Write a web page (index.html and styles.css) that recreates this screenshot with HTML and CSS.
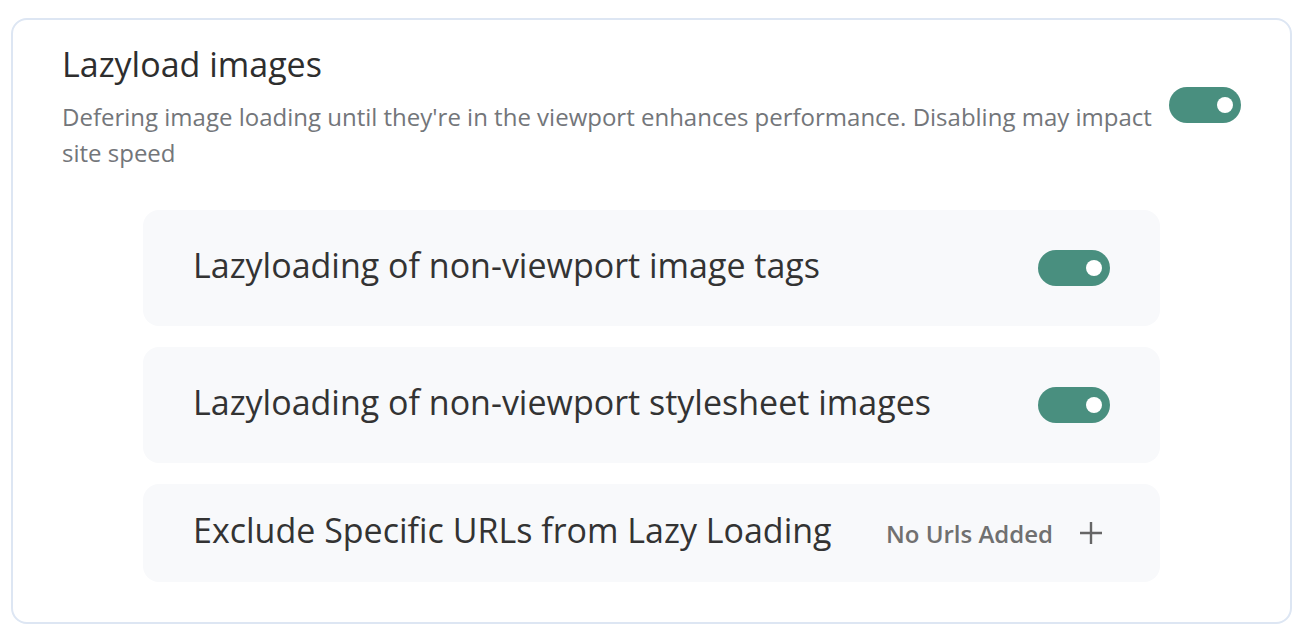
FILE: index.html
```html
<!DOCTYPE html>
<html>
<head>
<meta charset="utf-8">
<link rel="stylesheet" href="styles.css">
</head>
<body>
<div class="card">
  <div class="header">
    <div class="header-text">
      <h2 class="title">Lazyload images</h2>
      <p class="desc">Defering image loading until they're in the viewport enhances performance. Disabling may impact site speed</p>
    </div>
    <span class="toggle"><span class="knob"></span></span>
  </div>
  <div class="rows">
    <div class="row tall">
      <span class="row-label">Lazyloading of non-viewport image tags</span>
      <span class="toggle"><span class="knob"></span></span>
    </div>
    <div class="row tall">
      <span class="row-label">Lazyloading of non-viewport stylesheet images</span>
      <span class="toggle"><span class="knob"></span></span>
    </div>
    <div class="row short">
      <span class="row-label">Exclude Specific URLs from Lazy Loading</span>
      <div class="urls">
        <span class="no-urls">No Urls Added</span>
        <svg class="plus" width="24" height="24" viewBox="0 0 24 24"><path d="M12 1v22M1 12h22" stroke="#666" stroke-width="2.4" fill="none"/></svg>
      </div>
    </div>
  </div>
</div>
</body>
</html>
```
FILE: styles.css
```css
html, body { margin: 0; padding: 0; background: #fff; }
body { font-family: "Open Sans", sans-serif; }
.card {
  margin: 18px 12px 12px 11px;
  height: 606px;
  box-sizing: border-box;
  border: 2px solid #dde6f3;
  border-radius: 16px;
  padding: 22px 49px 0 49px;
}
.header { display: flex; align-items: center; justify-content: space-between; }
.header-text { width: 1100px; }
.title { margin: 0; font-weight: 400; font-size: 34px; line-height: 44px; color: #2e2e2e; }
.desc { margin: 13px 0 0; font-size: 24px; line-height: 36px; color: #73767a; }
.toggle {
  flex: none;
  position: relative;
  width: 72px; height: 36px;
  border-radius: 18px;
  background: #498f7f;
}
.header .toggle { margin-top: -3px; }
.knob {
  position: absolute;
  right: 8px; top: 10px;
  width: 16px; height: 16px;
  border-radius: 50%;
  background: #fff;
}
.rows {
  margin: 39px 81px 0 81px;
  display: flex; flex-direction: column; gap: 21px;
}
.row {
  display: flex; align-items: center; justify-content: space-between;
  background: #f8f9fb;
  border-radius: 16px;
  padding: 0 50px;
}
.row.tall { height: 116px; }
.row.short { height: 98px; }
.row-label { font-size: 34px; color: #333; padding-bottom: 7px; }
.urls { display: flex; align-items: center; gap: 26px; margin-right: 7px; }
.no-urls { font-size: 24px; font-weight: 600; color: #707070; }
.plus { display: block; }
```
